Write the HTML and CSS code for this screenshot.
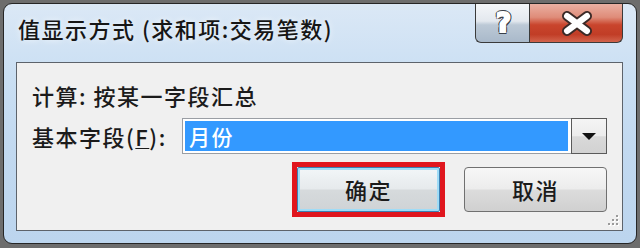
FILE: index.html
```html
<!DOCTYPE html>
<html lang="zh-CN">
<head>
<meta charset="utf-8">
<title>值显示方式</title>
<link rel="stylesheet" href="styles.css">
</head>
<body>
<div class="window">
  <div class="titlebar">
    <div class="title">值显示方式 (求和项:交易笔数)</div>
    <div class="controls">
      <div class="ctl help"><span class="q">?</span></div>
      <div class="ctl close">
        <svg width="94" height="38" viewBox="0 0 94 38"><path d="M37 12 L57 27 M57 12 L37 27" class="xo"/><path d="M37 12 L57 27 M57 12 L37 27" class="xi"/></svg>
      </div>
    </div>
  </div>
  <div class="content">
    <div class="row1">计算: 按某一字段汇总</div>
    <div class="row2">
      <div class="label">基本字段(<u>F</u>):</div>
      <div class="combo">
        <div class="field">月份</div>
        <div class="drop"><span class="tri"></span></div>
      </div>
    </div>
    <div class="actions">
      <div class="mark"><div class="btn ok">确定</div></div>
      <div class="btn">取消</div>
    </div>
    <div class="grip">
      <i class="d1"></i><i class="d2"></i><i class="d3"></i><i class="d4"></i><i class="d5"></i><i class="d6"></i>
    </div>
  </div>
</div>
</body>
</html>
```
FILE: styles.css
```css
html, body {
  margin: 0;
  padding: 0;
}
body {
  width: 640px;
  height: 248px;
  overflow: hidden;
  background: #6d6d6d;
  font-family: "Noto Sans CJK SC", "Noto Sans", sans-serif;
  color: #1b1b1b;
}
.window {
  box-sizing: border-box;
  margin: 3px 0 0 3px;
  width: 634px;
  height: 241px;
  border: 1px solid #262626;
  border-radius: 9px;
  background: linear-gradient(180deg, #dbe8f6 0%, #cadff3 30%, #c2d9f0 60%, #bcd5ee 100%);
  display: flex;
  flex-direction: column;
}
.titlebar {
  height: 58px;
  display: flex;
  justify-content: space-between;
  align-items: flex-start;
}
.title {
  padding: 12px 0 0 14px;
  font-size: 22px;
  font-weight: 500;
  line-height: 24px;
  letter-spacing: 1.5px;
  color: #161616;
  text-shadow: 0 0 6px rgba(255,255,255,0.8);
}
.controls {
  display: flex;
  margin-right: 13px;
  height: 39px;
}
.ctl {
  box-sizing: border-box;
  height: 39px;
  border: 1px solid #3a3a3a;
  border-top: none;
}
.ctl svg { display: block; }
.help {
  width: 54px;
  border-right: none;
  border-radius: 0 0 0 6px;
  background: linear-gradient(180deg, #f4f6f9 0%, #e3e8ee 45%, #bcc9d6 55%, #a9b9ca 100%);
  display: flex;
  align-items: center;
  justify-content: center;
}
.q {
  font-family: "DejaVu Sans", sans-serif;
  font-weight: 700;
  font-size: 26px;
  line-height: 30px;
  color: #ffffff;
  margin-left: 2px;
  -webkit-text-stroke: 2px #ffffff;
  text-shadow: 2px 0 0 #3a3f48, -2px 0 0 #3a3f48, 0 2px 0 #3a3f48, 0 -2px 0 #3a3f48,
    1.5px 1.5px 0 #3a3f48, -1.5px -1.5px 0 #3a3f48, 1.5px -1.5px 0 #3a3f48, -1.5px 1.5px 0 #3a3f48;
}
.close {
  width: 94px;
  border-radius: 0 0 6px 0;
  background: linear-gradient(180deg, #eab0a3 0%, #df8c79 35%, #c9452d 55%, #c13d26 80%, #d2634c 100%);
}
.xo {
  stroke: #3b2a27;
  stroke-width: 10px;
  stroke-linecap: round;
  fill: none;
}
.xi {
  stroke: #ffffff;
  stroke-width: 6px;
  stroke-linecap: round;
  fill: none;
}
.content {
  position: relative;
  flex: 1;
  margin: 0 13px 12px 12px;
  border: 1px solid #5d636b;
  background: #f0f0f0;
  font-size: 22px;
  font-weight: 500;
  letter-spacing: 1.5px;
}
.row1 {
  margin-top: 20px;
  padding-left: 15px;
  line-height: 24px;
}
.row2 {
  margin-top: 11px;
  padding: 0 15px;
  display: flex;
  align-items: center;
  height: 36px;
}
.label {
  width: 150px;
  flex: none;
  line-height: 24px;
}
.label u { text-decoration-thickness: 1px; text-underline-offset: 2px; }
.combo {
  flex: 1;
  height: 36px;
  box-sizing: border-box;
  display: flex;
  border: 1px solid #9a9ea4;
  background: #ffffff;
}
.field {
  flex: 1;
  margin: 1px 2px 1px 1px;
  border: 1px solid #ffffff;
  background: #3399ff;
  color: #ffffff;
  padding-left: 4px;
  font-size: 21px;
  line-height: 30px;
}
.drop {
  width: 36px;
  box-sizing: border-box;
  margin: -1px -1px -1px 0;
  border: 1px solid #5a5a5a;
  background: linear-gradient(180deg, #f4f4f4 0%, #ececec 50%, #d9d9d9 52%, #d2d2d2 100%);
  display: flex;
  align-items: center;
  justify-content: center;
}
.tri {
  width: 0;
  height: 0;
  border-left: 7px solid transparent;
  border-right: 7px solid transparent;
  border-top: 7px solid #111;
}
.actions {
  margin-top: 8px;
  padding-right: 15px;
  display: flex;
  justify-content: flex-end;
  align-items: center;
  gap: 19px;
}
.mark {
  border: 5px solid #e0161e;
}
.btn {
  box-sizing: border-box;
  width: 143px;
  height: 45px;
  border: 1px solid #707070;
  border-radius: 4px;
  background: linear-gradient(180deg, #f7f7f7 0%, #ececec 48%, #dcdcdc 52%, #d0d0d0 100%);
  text-align: center;
  line-height: 42px;
  font-size: 22px;
  letter-spacing: 1.5px;
}
.btn.ok {
  border: 1px solid #3c7fb1;
  border-radius: 2px;
  box-shadow: inset 0 0 0 2px #9fdcf7;
  background: linear-gradient(180deg, #f2f6f8 0%, #e6eaec 48%, #d6dadc 52%, #cfd3d6 100%);
}
.grip {
  position: absolute;
  right: 2px;
  bottom: 3px;
  width: 12px;
  height: 12px;
}
.grip i {
  position: absolute;
  width: 2px;
  height: 2px;
  background: #9a9a9a;
  box-shadow: 1px 1px 0 #ffffff;
}
.d1 { left: 8px; top: 0; }
.d2 { left: 4px; top: 4px; }
.d3 { left: 8px; top: 4px; }
.d4 { left: 0; top: 8px; }
.d5 { left: 4px; top: 8px; }
.d6 { left: 8px; top: 8px; }
```
